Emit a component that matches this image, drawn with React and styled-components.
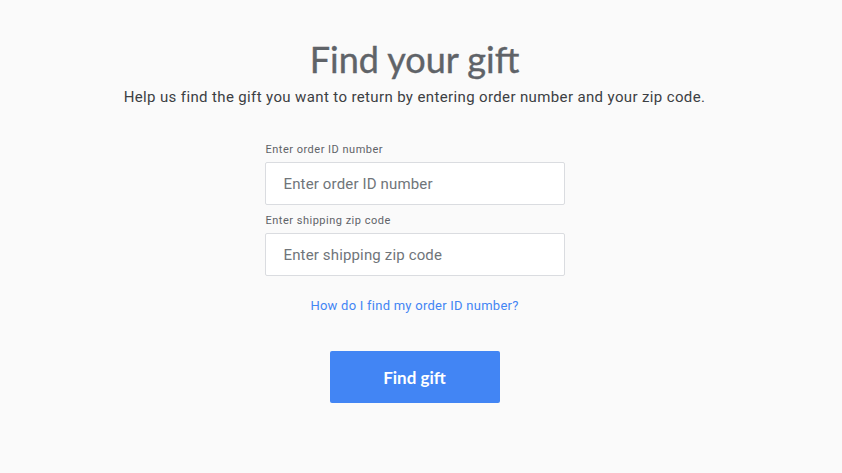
import React from 'react';
import styled, { createGlobalStyle } from 'styled-components';

const GlobalStyle = createGlobalStyle`
  html, body {
    margin: 0;
    padding: 0;
    background: #fafafa;
  }
  body {
    font-family: Roboto, "Liberation Sans", sans-serif;
  }
`;

const Page = styled.main`
  display: flex;
  flex-direction: column;
  align-items: center;
  padding: 37px 13px 0 0;
  min-height: 473px;
  box-sizing: border-box;
`;

const Title = styled.h1`
  margin: 0;
  font-family: Lato, "Open Sans", sans-serif;
  font-weight: 400;
  font-size: 36px;
  line-height: 44px;
  color: #5f6368;
  -webkit-text-stroke: 0.4px #5f6368;
`;

const Subtitle = styled.p`
  margin: 6px 0 0;
  font-size: 15px;
  line-height: 20px;
  letter-spacing: 0.37px;
  color: #3c4043;
`;

const Form = styled.form`
  display: flex;
  flex-direction: column;
  width: 300px;
  margin-top: 36px;
`;

const Field = styled.label`
  display: flex;
  flex-direction: column;
  gap: 5px;
  & + & {
    margin-top: 9px;
  }
`;

const Label = styled.span`
  padding-left: 1px;
  font-size: 11px;
  line-height: 14px;
  letter-spacing: 0.5px;
  color: #5f6368;
`;

const Input = styled.input`
  height: 43px;
  box-sizing: border-box;
  border: 1px solid #dadce0;
  border-radius: 2px;
  background: #fff;
  padding: 0 18px;
  font-family: Roboto, "Liberation Sans", sans-serif;
  font-size: 15px;
  letter-spacing: 0.15px;
  color: #202124;
  outline: none;
  &::placeholder {
    color: #70757a;
  }
`;

const HelpLink = styled.a`
  align-self: center;
  margin-top: 22px;
  font-size: 13px;
  line-height: 16px;
  letter-spacing: 0.25px;
  color: #4285f4;
  text-decoration: none;
`;

const Button = styled.button`
  align-self: center;
  margin-top: 37px;
  width: 170px;
  height: 52px;
  border: none;
  border-radius: 2px;
  background: #4285f4;
  color: #fff;
  font-family: Lato, "Open Sans", sans-serif;
  font-weight: 700;
  font-size: 17px;
  cursor: pointer;
`;

export default function App() {
  return (
    <>
      <GlobalStyle />
      <Page>
        <Title>Find your gift</Title>
        <Subtitle>
          Help us find the gift you want to return by entering order number and your zip code.
        </Subtitle>
        <Form onSubmit={e => e.preventDefault()}>
          <Field>
            <Label>Enter order ID number</Label>
            <Input placeholder="Enter order ID number" />
          </Field>
          <Field>
            <Label>Enter shipping zip code</Label>
            <Input placeholder="Enter shipping zip code" />
          </Field>
          <HelpLink href="#">How do I find my order ID number?</HelpLink>
          <Button type="submit">Find gift</Button>
        </Form>
      </Page>
    </>
  );
}
